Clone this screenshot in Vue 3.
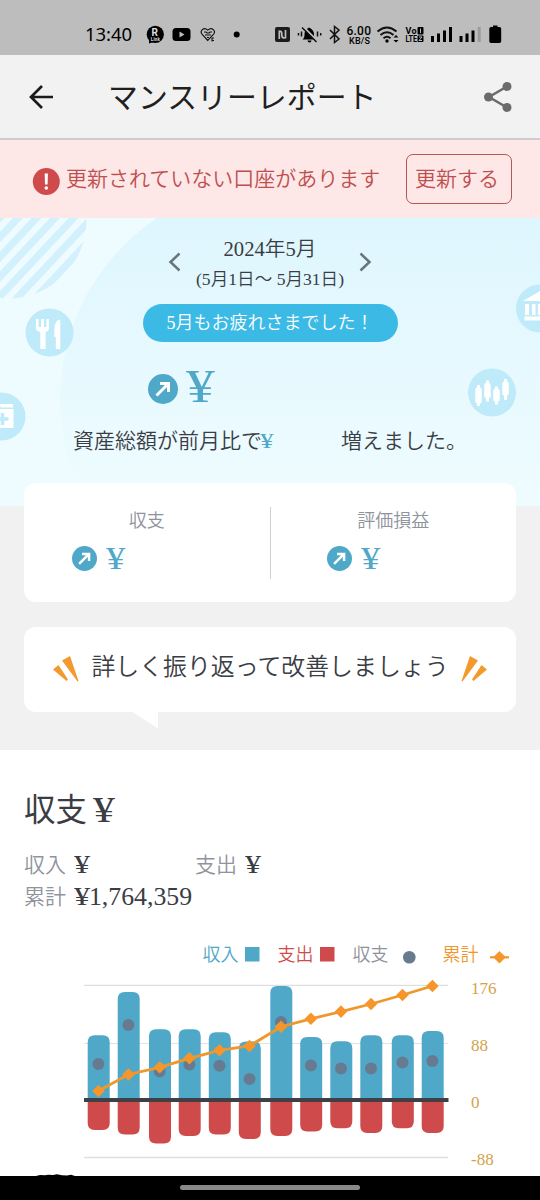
<script setup>
const bars = [
  { x: 98.7, top: 1035.3, bottom: 1130, dot: 1064, sum: 1091 },
  { x: 128.7, top: 992, bottom: 1134.5, dot: 1025, sum: 1074.5 },
  { x: 160, top: 1029.3, bottom: 1143.5, dot: 1071.5, sum: 1067.3 },
  { x: 189.7, top: 1029.3, bottom: 1136, dot: 1064.5, sum: 1058.3 },
  { x: 219.8, top: 1032.3, bottom: 1134.5, dot: 1065.7, sum: 1050.3 },
  { x: 249.8, top: 1041.5, bottom: 1139, dot: 1079, sum: 1046 },
  { x: 281.3, top: 986, bottom: 1136, dot: 1022, sum: 1026.7 },
  { x: 311.2, top: 1037, bottom: 1131.5, dot: 1065.5, sum: 1018.8 },
  { x: 341.3, top: 1041.3, bottom: 1128.3, dot: 1068.5, sum: 1011.6 },
  { x: 371.3, top: 1035.3, bottom: 1133, dot: 1068.5, sum: 1004 },
  { x: 402.8, top: 1035.3, bottom: 1128.3, dot: 1062.5, sum: 995 },
  { x: 432.7, top: 1031, bottom: 1133, dot: 1061, sum: 986 },
]
const px = (b) => b.x - 0.3
const line = bars.map((b) => `${px(b)},${b.sum}`).join(' ')
const diamond = (x, y, r = 6.3) => `M${x} ${y - r}l${r} ${r}l${-r} ${r}l${-r} ${-r}z`
const bar = (x, from, to) => {
  const d = to < from ? 1 : -1
  const r = 7
  return `M${x - 11} ${from}V${to + r * d}Q${x - 11} ${to} ${x - 11 + r} ${to}H${x + 11 - r}Q${x + 11} ${to} ${x + 11} ${to + r * d}V${from}z`
}
const stripes = [-4, -3, -2, -1, 0, 1, 2, 3, 4, 5, 6, 7, 8]
</script>

<template>
  <div class="screen">
    <div class="status">
      <svg width="540" height="55" viewBox="0 0 540 55">
        <text x="85" y="41.3" class="clock" textLength="47">13:40</text>
        <circle cx="155.3" cy="34.3" r="8.6" />
        <path d="M149 38v5.5l6-2z" />
        <text x="151.4" y="36" class="logo-r">R</text>
        <text x="150.8" y="41" class="logo-s" textLength="9">Link</text>
        <rect x="172.5" y="28" width="18" height="13" rx="3.5" />
        <path d="M179.5 31.6v5.8l5-2.9z" fill="#bdbdbd" />
        <path d="M207.8 40.5l-5.600-6c-3-3.500 1.500-8 5.600-4.300c4.100-3.700 8.600 .8 5.600 4.300z" class="ln thin" />
        <path d="M204 32h2l1 1h2l1-1h2M205 35h6M207 37.500h2M212 37.500v4M212 38h2M212 40.500h2" class="ln thin" />
        <circle cx="236.700" cy="34.500" r="3" />
        <rect x="275" y="27" width="15" height="15" rx="2" fill="#1c1c1c" />
        <path d="M279.300 39V30.500M279.300 31q2.500 0 2.500 2.500v2q0 2.500 3 2.500M285.500 38.500V30" fill="none" stroke="#bdbdbd" stroke-width="1.700" />
        <path d="M302.500 39.500c2-2 2-3 2-5.500c0-3 2-5 4.500-6.500c3 1.500 5 3.500 5 6.500c0 2.500 0 3.500 2 5.500zM307.500 40.500h4a2 2 0 0 1-4 0z" />
        <path d="M303.500 27l14 14" stroke="#bdbdbd" stroke-width="2" />
        <path d="M302 27.500l14.500 14.500M298.500 33v2.500M301.500 31.500v5M317.500 31.500v5M320.700 33v2.500" class="ln" />
        <path d="M330 30l9 9l-4.500 3.500v-16l4.500 3.500l-9 9" class="ln" />
        <text x="346.500" y="34.500" class="num" textLength="24.500">6.00</text>
        <text x="349" y="43.500" class="unit" textLength="21">KB/S</text>
        <path d="M377.500 31.500q9.500-8 19 0M380.500 35q6.500-5.500 13 0M383.500 38.200q3.500-2.800 7 0" class="ln wifi" />
        <circle cx="387" cy="41" r="1.700" />
        <path d="M393.500 37.500l2.500-2.500l2.500 2.500zM393.500 40l2.500 2.500l2.500-2.500z" />
        <text x="405.500" y="34.300" class="volte" textLength="11">Vo</text>
        <text x="405.500" y="42" class="volte" textLength="11.500" lengthAdjust="spacingAndGlyphs">LTE</text>
        <rect x="417.500" y="27" width="6" height="7.500" rx="1" />
        <rect x="417.500" y="35.500" width="6" height="6.500" rx="1" />
        <path d="M420.500 28.500v4.500M419 37h3l-3 3.500h3" fill="none" stroke="#bdbdbd" />
        <path d="M431 36h3v6h-3zM437 33.500h3v8.500h-3zM443 30.500h3v11.500h-3zM449 27h3v15h-3zM459.500 36h3v6h-3zM465.500 33.500h3v8.500h-3zM471.500 30.500h3v11.500h-3z" />
        <path d="M477.700 27h3v15h-3z" fill="#9b9b9b" />
        <path d="M491 27h2v-1.500h4.500V27h2q1.700 0 1.700 1.700v12.600q0 1.700-1.700 1.700h-8.500q-1.700 0-1.700-1.700v-12.600q0-1.700 1.700-1.700z" />
      </svg>
    </div>

    <header class="appbar">
      <svg class="back" width="28" height="28" viewBox="0 0 28 28"><path d="M26 14H4M15 3L4 14l11 11" /></svg>
      <h1>マンスリーレポート</h1>
      <svg class="share" width="30" height="32" viewBox="0 0 30 32">
        <path d="M24 5.500L6 16l18 10.500" fill="none" stroke="#6b6b6b" stroke-width="2.600" />
        <circle cx="24" cy="5.500" r="4.500" /><circle cx="5.500" cy="16" r="4.500" /><circle cx="24" cy="26.500" r="4.500" />
      </svg>
    </header>

    <div class="alert">
      <svg width="28" height="28" viewBox="0 0 28 28">
        <circle cx="14.300" cy="13.500" r="13.500" fill="#cf4b4b" />
        <path d="M12.700 5.500h3.200l-.3 11h-2.600z" fill="#fff" /><circle cx="14.300" cy="20" r="1.800" fill="#fff" />
      </svg>
      <span class="alert-text">更新されていない口座があります</span>
      <button>更新する</button>
    </div>

    <section class="hero">
      <svg class="art" width="540" height="288" viewBox="0 218 540 288">
        <defs>
          <linearGradient id="sky" x1="0" y1="0" x2="0" y2="1">
            <stop offset="0" stop-color="#def6fe" /><stop offset="1" stop-color="#effcff" />
          </linearGradient>
          <clipPath id="disc"><circle cx="8" cy="220" r="78.500" /></clipPath>
        </defs>
        <path d="M157 218A219 219 0 0 0 60 400Q60 460 90 506H540V218z" fill="url(#sky)" />
        <g clip-path="url(#disc)">
          <path v-for="s in stripes" :key="s" :d="`M${s * 18.5 + 13} 218h10l-90 96h-10z`" fill="#d2f1fc" />
        </g>
        <g fill="#bfeaf9">
          <circle cx="49.500" cy="332.500" r="24" /><circle cx="1.500" cy="416.500" r="24" />
          <circle cx="492" cy="392.500" r="24" /><circle cx="540" cy="308.500" r="24" />
        </g>
        <g fill="#fff">
          <path d="M36 319h2.500v8h2.500v-8h2.900v8h2.500v-8h2.500v9q0 3-3.300 4v17h-5.300v-17q-4.300-1-4.300-4z" />
          <path d="M54.300 330q0-10 6-10.500v29.500h-4.500v-12h-1.500z" />
          <path d="M-14 409h27.500v19h-27.500zM0 404h12.500l1 3.500h-13z" />
          <path d="M523 301l17-10v10zM525 304h4v11h-4zM532 304h3.500v11h-3.500zM538 304h2v11h-2zM524.500 316.500h16v4h-16z" />
          <path d="M477 385h3v2.500q1.700 0 1.700 2v12q0 2-1.700 2v2.500h-3v-2.500q-1.700 0-1.700-2v-12q0-2 1.700-2zM486 380.500h3v2.500q1.700 0 1.700 2v11q0 2-1.700 2v3.500h-3v-3.500q-1.700 0-1.700-2v-11q0-2 1.700-2zM495 386.500h3v2.500q1.700 0 1.700 2v8.500q0 2-1.700 2v3h-3v-3q-1.700 0-1.700-2v-8.500q0-2 1.700-2zM504 379h3v2.500q1.700 0 1.700 2v10q0 2-1.700 2v4.500h-3v-4.500q-1.700 0-1.700-2v-10q0-2 1.700-2z" />
        </g>
        <path d="M2.500 413v12M-4 419h12.500" stroke="#bfeaf9" stroke-width="3.500" />
      </svg>

      <div class="period">
        <svg width="14" height="20" viewBox="0 0 14 20"><path d="M11.500 1.500L2.500 10l9 8.500" /></svg>
        <div class="dates">
          <p class="month">2024年5月</p>
          <p class="range">(5月1日〜 5月31日)</p>
        </div>
        <svg width="14" height="20" viewBox="0 0 14 20"><path d="M2.500 1.500l9 8.500l-9 8.500" /></svg>
      </div>
      <div class="praise">5月もお疲れさまでした！</div>
      <div class="total">
        <svg class="up" viewBox="0 0 30 30"><circle cx="15" cy="15" r="15" /><path d="M8.500 21.500L20.500 9.500M12 9.500h8.500V18" /></svg>
        <span class="yen">¥</span>
      </div>
      <p class="compare"><span>資産総額が前月比で</span><i><span class="yen">¥</span></i><span>増えました。</span></p>
    </section>

    <section class="cards">
      <div class="card summary">
        <div class="cell">
          <h3>収支</h3>
          <div class="amt"><svg class="up" viewBox="0 0 30 30"><circle cx="15" cy="15" r="15" /><path d="M8.500 21.500L20.500 9.500M12 9.500h8.500V18" /></svg><span class="yen">¥</span></div>
        </div>
        <div class="cell right">
          <h3>評価損益</h3>
          <div class="amt"><svg class="up" viewBox="0 0 30 30"><circle cx="15" cy="15" r="15" /><path d="M8.500 21.500L20.500 9.500M12 9.500h8.500V18" /></svg><span class="yen">¥</span></div>
        </div>
      </div>
      <div class="card bubble">
        <svg width="26" height="26" viewBox="0 0 26 26"><path d="M0 13.500L5.500 9L15 23.500L13.500 25zM9 4.500L17 0L25.500 25L24.500 25.500z" /></svg>
        <span>詳しく振り返って改善しましょう</span>
        <svg width="26" height="26" viewBox="0 0 26 26"><path d="M26 13.500L20.500 9L11 23.500L12.500 25zM17 4.500L9 0L0.500 25L1.500 25.500z" /></svg>
      </div>
    </section>

    <section class="report">
      <h2>収支<span class="yen">¥</span></h2>
      <div class="figures">
        <div><label>収入</label><b><span class="yen">¥</span></b></div>
        <div><label>支出</label><b><span class="yen">¥</span></b></div>
        <div><label>累計</label><b><span class="yen">¥</span>1,764,359</b></div>
      </div>
      <svg class="chart" width="540" height="246" viewBox="0 930 540 246">
        <g class="legend">
          <text x="202.500" y="961.300" fill="#4fa8c8">収入</text>
          <rect x="245" y="947" width="14.500" height="14.500" fill="#4fa8c8" />
          <text x="277.500" y="961.300" fill="#cf4b4b">支出</text>
          <rect x="320" y="947" width="14.500" height="14.500" fill="#cf4b4b" />
          <text x="352.500" y="961.300" fill="#8f939c">収支</text>
          <circle cx="409.300" cy="957.300" r="6.300" fill="#677a8e" />
          <text x="442.500" y="961.300" fill="#ee982c">累計</text>
          <path d="M490 957.300h19" stroke="#ee982c" stroke-width="2.200" />
          <path :d="diamond(499.500, 957.300)" fill="#f6962a" />
        </g>
        <path d="M84 985.300h364M84 1157.500h364" stroke="#dfdfdf" stroke-width="1.300" />
        <path d="M84 1043.500h364" stroke="#e2e2e2" stroke-width="1.200" />
        <g v-for="b in bars" :key="b.x">
          <path :d="bar(b.x, 1100, b.top)" fill="#4fa8c8" />
          <path :d="bar(b.x, 1100, b.bottom)" fill="#cf4b4b" />
          <circle :cx="px(b)" :cy="b.dot" r="6" fill="#687a90" />
        </g>
        <path d="M84 1100h364.500" stroke="#3f4045" stroke-width="4.200" />
        <polyline :points="line" fill="none" stroke="#ee982c" stroke-width="2.800" />
        <path v-for="b in bars" :key="b.sum" :d="diamond(px(b), b.sum)" fill="#f6962a" />
        <g class="axis">
          <text x="471" y="994">176</text><text x="471" y="1051">88</text>
          <text x="471" y="1108">0</text><text x="471" y="1165">-88</text>
        </g>
        <path d="M36 1176l4-1l5 .3l3-.5l5 .3l4-.8l5 .9l5 .4l4-.8l4 1.200z" />
      </svg>
    </section>
    <div class="nav"><div class="pill"></div></div>
  </div>
</template>

<style>
body { margin: 0; background: #fff; }
</style>
<style scoped>
* { box-sizing: border-box; }
h1, h2, h3, p { margin: 0; font-weight: inherit; }
.screen { width: 540px; height: 1200px; overflow: hidden; display: flex; flex-direction: column; background: #fff; color: #3a3d44; font-family: "Liberation Serif", "Noto Sans CJK JP", sans-serif; font-weight: 350; }
.screen svg { display: block; flex: none; }
.status { height: 55px; background: #bdbdbd; }
.clock { font: 400 18.500px "Noto Sans", sans-serif; }
.logo-r { font: bold 10px Roboto, sans-serif; fill: #ddd; }
.logo-s { font: bold 4.500px Roboto, sans-serif; fill: #ddd; }
.num { font: 500 12px Roboto, sans-serif; }
.unit { font: 500 9px Roboto, sans-serif; }
.volte { font: bold 9px Roboto, sans-serif; }
.ln { fill: none; stroke: #111; stroke-width: 1.500; }
.thin { stroke-width: 1.100; }
.wifi { stroke-width: 2; }
.yen { display: inline-block; transform: scaleX(1.250); transform-origin: left; }
.appbar { height: 85px; display: flex; align-items: center; padding: 0 27px; background: #f2f2f2; border-bottom: 2px solid #cfcccc; }
.back path { fill: none; stroke: #1b1b1b; stroke-width: 2.700; }
.appbar h1 { margin-left: 53px; padding-top: 2px; flex: 1; color: #1f1f1f; font-size: 29.900px; font-weight: 400; line-height: 44px; }
.share { fill: #6b6b6b; }
.alert { height: 78px; display: flex; align-items: center; padding: 0 28px 0 32px; background: #fde7e7; color: #bf4f4f; font-size: 21px; }
.alert > svg { margin-top: 6px; }
.alert-text { margin-left: 6px; flex: 1; line-height: 30px; }
.alert button { width: 106px; height: 50px; padding: 0 4px 4px 0; border: 1.500px solid #b85555; border-radius: 7px; background: transparent; color: inherit; font: inherit; white-space: nowrap; }
.hero { position: relative; height: 288px; padding-top: 15px; background: #effcff; display: flex; flex-direction: column; align-items: center; }
.art { position: absolute; left: 0; top: 0; }
.period { position: relative; display: flex; align-items: center; gap: 14px; height: 60px; }
.period svg { margin-top: -3px; }
.period path { fill: none; stroke: #6a7480; stroke-width: 2.500; }
.dates { width: 148px; text-align: center; white-space: nowrap; }
.month { font-size: 20.700px; line-height: 31px; }
.range { font-size: 17.600px; line-height: 28px; }
.praise { position: relative; margin-top: 11px; width: 255px; height: 38px; padding-left: 24px; border-radius: 19px; background: #3bbae6; color: #fff; font-size: 18px; line-height: 38px; white-space: nowrap; }
.total { position: relative; align-self: flex-start; margin: 23px 0 0 147.500px; height: 44px; display: flex; align-items: center; gap: 8px; color: #4fa8c8; font-size: 46px; line-height: 44px; }
.total .up { margin-top: 4px; }
.up { width: 30px; height: 30px; fill: #4fa8c8; }
.up path { fill: none; stroke: #fff; stroke-width: 3; }
.compare { position: relative; align-self: flex-start; margin: 16px 0 0 73px; display: flex; font-size: 21px; line-height: 32px; white-space: nowrap; }
.compare i { width: 81px; margin-left: -2px; font-style: normal; font-size: 22px; color: #4fa8c8; }
.cards { height: 244px; background: #f1f1f1; padding: 0 24px; }
.card { border-radius: 12px; background: #fff; position: relative; }
.summary { height: 119px; margin-top: -23px; display: flex; padding: 24px 0; }
.cell { flex: 1; height: 72px; }
.right { border-left: 1.500px solid #cfd0d3; }
.cell h3 { text-align: center; font-size: 18px; line-height: 28px; color: #8f939c; }
.amt { display: flex; align-items: center; gap: 9px; height: 34px; margin: 6px 0 0 48px; color: #4fa8c8; font-size: 31px; }
.amt .yen { padding-top: 2px; }
.right .amt { margin-left: 56px; }
.amt .up { width: 25px; height: 25px; }
.bubble { height: 85px; margin-top: 24.500px; padding: 0 29px; display: flex; align-items: center; justify-content: space-between; font-size: 23.900px; white-space: nowrap; }
.bubble span { padding-bottom: 10px; }
.bubble path { fill: #f39a2e; }
.bubble::after { content: ""; position: absolute; left: 106px; top: 84px; width: 28px; height: 18px; background: #fff; clip-path: polygon(0 0, 100% 0, 100% 100%); }
.report { height: 426px; padding-top: 37px; }
h2 { margin-left: 24px; font-size: 31.500px; font-weight: 400; line-height: 48px; height: 48px; display: flex; }
h2 span { margin-left: 6px; font-size: 35px; }
.figures { height: 95px; margin-left: 24px; padding-top: 14px; display: grid; grid-template-columns: 171px 1fr; grid-auto-rows: 32px; align-content: start; }
.figures div { display: flex; align-items: center; line-height: 32px; }
.figures label { width: 50px; color: #8f939c; font-size: 21px; }
.figures b { font-weight: 400; font-size: 25.800px; }
.figures b .yen { margin-right: 2px; }
.legend text { font: 350 18px "Noto Sans CJK JP", sans-serif; }
.axis text { font: 17px "Liberation Serif", serif; fill: #d5a24c; }
.nav { height: 24px; background: #000; display: flex; justify-content: center; padding-top: 9px; }
.pill { width: 180px; height: 4.500px; border-radius: 3px; background: #8a8a8a; }
</style>
